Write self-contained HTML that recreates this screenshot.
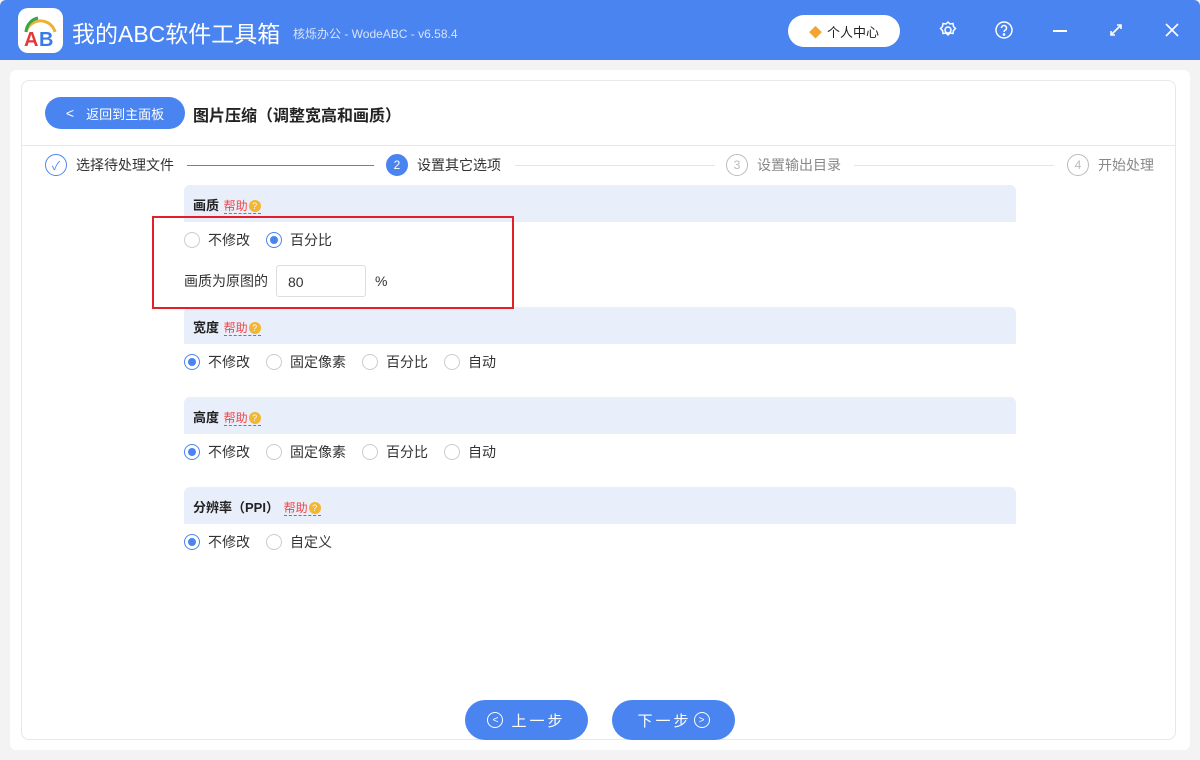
<!DOCTYPE html>
<html><head><meta charset="utf-8"><style>
*{margin:0;padding:0;box-sizing:border-box}
body{width:1200px;height:760px;background:#f3f3f3;font-family:"Liberation Sans","Noto Sans CJK SC",sans-serif;position:relative;overflow:hidden;font-size:14px;color:#333}
.abs{position:absolute}
.title{left:0;top:0;width:1200px;height:60px;background:#4a84f0;border-radius:6px 6px 0 0}
.panel{left:10px;top:70px;width:1180px;height:680px;background:#fff;border-radius:6px}
.inner{left:21px;top:80px;width:1155px;height:660px;border:1px solid #e8e8e8;border-radius:8px;background:#fff}
.sec{left:184px;width:832px;height:37px;background:#e8eefa;border-radius:6px 6px 0 0;font-weight:bold;font-size:13px;padding:10px 0 0 9px;color:#222}
.help{color:#f04848;font-weight:normal;border-bottom:1px dashed #f04848;margin-left:1px;font-size:12px}
.q{display:inline-block;width:12px;height:12px;border-radius:50%;background:#f2b630;color:#fff;font-size:9px;text-align:center;line-height:12px;margin-left:1px;vertical-align:1px}
.row{left:184px;font-size:14px;display:flex;align-items:center}
.r{width:16px;height:16px;border:1px solid #ccc;border-radius:50%;margin-right:8px;position:relative;background:#fff}
.r.on{border-color:#4a84f0}
.r.on:after{content:"";position:absolute;left:3px;top:3px;width:8px;height:8px;border-radius:50%;background:#4a84f0}
.opt{display:flex;align-items:center;margin-right:16px}
.btn{background:#4a84f0;color:#fff;border-radius:20px;height:40px;display:flex;align-items:center;justify-content:center;font-size:15px;letter-spacing:3px}
.step{top:154px;display:flex;align-items:center;font-size:14px}
.c{width:22px;height:22px;border-radius:50%;border:1px solid #bbb;color:#bbb;font-size:12px;display:flex;align-items:center;justify-content:center;margin-right:9px}
</style></head><body>
<div class="abs title"></div>
<div class="abs" style="left:18px;top:8px;width:45px;height:45px;background:#fff;border-radius:10px">
<svg width="45" height="45" viewBox="0 0 45 45"><path d="M8 24 A15 15 0 0 1 37 24" fill="none" stroke="#e9b23a" stroke-width="3"/><path d="M8 24 A15 15 0 0 1 20 10" fill="none" stroke="#3aa24a" stroke-width="3"/><text x="6" y="38" font-size="20" font-weight="bold" fill="#e03a3a" font-family="Liberation Sans">A</text><text x="21" y="38" font-size="20" font-weight="bold" fill="#3a7ae8" font-family="Liberation Sans">B</text></svg></div>
<div class="abs" style="left:72px;top:15px;color:#fff;font-size:23px">我的ABC软件工具箱</div>
<div class="abs" style="left:293px;top:25px;color:#d8e4fb;font-size:12px">核烁办公 - WodeABC - v6.58.4</div>
<div class="abs" style="left:788px;top:15px;width:112px;height:32px;background:#fff;border-radius:16px;display:flex;align-items:center;justify-content:center;font-size:13px;color:#222"><span style="color:#f2a630;margin-right:5px">◆</span>个人中心</div>
<svg class="abs" style="left:938px;top:20px" width="20" height="20" viewBox="0 0 20 20" fill="none" stroke="#fff" stroke-width="1.5"><circle cx="10" cy="10" r="3"/><path d="M10 2l2 2 3-.5.5 3 2 2-2 2-.5 3-3-.5-2 2-2-2-3 .5-.5-3-2-2 2-2 .5-3 3 .5z"/></svg>
<svg class="abs" style="left:994px;top:20px" width="20" height="20" viewBox="0 0 20 20" fill="none" stroke="#fff" stroke-width="1.5"><circle cx="10" cy="10" r="8"/><path d="M7.5 8a2.5 2.5 0 1 1 3.5 2.3c-.7.4-1 .8-1 1.7"/><circle cx="10" cy="14.5" r=".6" fill="#fff"/></svg>
<div class="abs" style="left:1053px;top:30px;width:14px;height:2px;background:#fff"></div>
<svg class="abs" style="left:1108px;top:22px" width="16" height="16" viewBox="0 0 16 16" stroke="#fff" stroke-width="1.6" fill="none"><path d="M3 13L13 3M9 3h4v4M3 9v4h4"/></svg>
<svg class="abs" style="left:1164px;top:22px" width="16" height="16" viewBox="0 0 16 16" stroke="#fff" stroke-width="1.6"><path d="M2 2L14 14M14 2L2 14"/></svg>

<div class="abs panel"></div>
<div class="abs inner"></div>
<div class="abs btn" style="left:45px;top:97px;width:140px;height:32px;font-size:13px;letter-spacing:0"><span style="margin-right:12px;font-size:14px">&lt;</span>返回到主面板</div>
<div class="abs" style="left:193px;top:102px;font-size:16px;font-weight:bold;color:#222">图片压缩（调整宽高和画质）</div>
<div class="abs" style="left:21px;top:145px;width:1155px;height:1px;background:#e8e8e8"></div>

<div class="abs step" style="left:45px"><div class="c" style="border-color:#4a84f0;color:#4a84f0">✓</div>选择待处理文件</div>
<div class="abs" style="left:187px;top:165px;width:187px;height:1px;background:#4a84f0"></div>
<div class="abs step" style="left:386px"><div class="c" style="background:#4a84f0;border-color:#4a84f0;color:#fff">2</div>设置其它选项</div>
<div class="abs" style="left:515px;top:165px;width:200px;height:1px;background:#e5e5e5"></div>
<div class="abs step" style="left:726px;color:#888"><div class="c">3</div>设置输出目录</div>
<div class="abs" style="left:854px;top:165px;width:200px;height:1px;background:#e5e5e5"></div>
<div class="abs step" style="left:1067px;color:#888"><div class="c">4</div>开始处理</div>

<div class="abs sec" style="top:185px">画质 <span class="help">帮助<span class="q">?</span></span></div>
<div class="abs row" style="top:230px"><div class="opt"><div class="r"></div>不修改</div><div class="opt"><div class="r on"></div>百分比</div></div>
<div class="abs row" style="top:265px">画质为原图的<div style="width:90px;height:32px;border:1px solid #ddd;border-radius:3px;margin-left:8px;padding:8px 0 0 11px">80</div><span style="margin-left:9px">%</span></div>

<div class="abs sec" style="top:307px">宽度 <span class="help">帮助<span class="q">?</span></span></div>
<div class="abs" style="left:152px;top:216px;width:362px;height:93px;border:2px solid #e3202a"></div>
<div class="abs row" style="top:352px"><div class="opt"><div class="r on"></div>不修改</div><div class="opt"><div class="r"></div>固定像素</div><div class="opt"><div class="r"></div>百分比</div><div class="opt"><div class="r"></div>自动</div></div>
<div class="abs sec" style="top:397px">高度 <span class="help">帮助<span class="q">?</span></span></div>
<div class="abs row" style="top:442px"><div class="opt"><div class="r on"></div>不修改</div><div class="opt"><div class="r"></div>固定像素</div><div class="opt"><div class="r"></div>百分比</div><div class="opt"><div class="r"></div>自动</div></div>
<div class="abs sec" style="top:487px">分辨率（PPI） <span class="help">帮助<span class="q">?</span></span></div>
<div class="abs row" style="top:532px"><div class="opt"><div class="r on"></div>不修改</div><div class="opt"><div class="r"></div>自定义</div></div>

<div class="abs btn" style="left:465px;top:700px;width:123px"><span style="display:inline-flex;width:16px;height:16px;border:1.5px solid #fff;border-radius:50%;font-size:10px;align-items:center;justify-content:center;letter-spacing:0;margin-right:8px">&lt;</span>上一步</div>
<div class="abs btn" style="left:612px;top:700px;width:123px">下一步<span style="display:inline-flex;width:16px;height:16px;border:1.5px solid #fff;border-radius:50%;font-size:10px;align-items:center;justify-content:center;letter-spacing:0;margin-left:2px">&gt;</span></div>
</body></html>
